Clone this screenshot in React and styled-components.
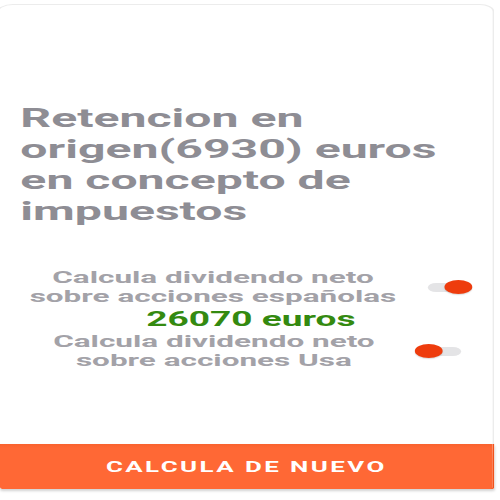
import React, { useState } from 'react';
import styled, { createGlobalStyle } from 'styled-components';

// the screenshot is a phone screen stretched sideways, so the whole page is laid
// out at phone width and then widened by the same factor
const STRETCH = 1.852;

const GlobalStyle = createGlobalStyle`
  html, body {
    margin: 0;
    padding: 0;
    background: #fff;
    overflow: hidden;
  }
  body {
    font-family: Roboto, "Liberation Sans", Arial, sans-serif;
  }
`;

const Screen = styled.div`
  width: ${500 / STRETCH}px;
  height: 500px;
  transform: scaleX(${STRETCH});
  transform-origin: 0 0;
  display: flex;
  flex-direction: column;
`;

const Card = styled.div`
  margin: 4px 0 0 -2px;
  width: 269px;
  height: 440px;
  box-sizing: border-box;
  border: 1px solid #ececec;
  border-bottom: none;
  border-radius: 9px 8px 0 0;
  padding: 98px 0 0 12px;
  display: flex;
  flex-direction: column;
`;

const Title = styled.h1`
  margin: 0;
  font-size: 26px;
  line-height: 31px;
  font-weight: 700;
  color: #8e8d94;
`;

const Options = styled.div`
  margin-top: 41px;
  margin-left: -10px;
  display: flex;
  flex-direction: column;
  align-items: center;
  gap: 2px;
`;

const OptionRow = styled.div`
  display: flex;
  align-items: center;
  justify-content: center;
  gap: ${p => p.$gap}px;
  padding-left: ${p => p.$shift}px;
`;

const OptionText = styled.div`
  font-size: 17px;
  line-height: 19px;
  font-weight: 700;
  color: #a3a2a8;
  text-align: center;
`;

const Result = styled.div`
  font-size: 20px;
  line-height: 22px;
  font-weight: 700;
  color: #348a10;
  padding-left: 4px;
`;

const Track = styled.button`
  position: relative;
  width: 24px;
  height: 9px;
  padding: 0;
  border: none;
  border-radius: 5px;
  background: #e4e4e6;
  cursor: pointer;
  flex-shrink: 0;
`;

const Thumb = styled.span`
  position: absolute;
  top: 50%;
  left: ${p => (p.$on ? 9 : -1)}px;
  width: 15px;
  height: 14px;
  margin-top: -7px;
  border-radius: 50%;
  background: #ee3c0d;
  box-shadow: 0 1px 1px rgba(0, 0, 0, 0.15);
`;

const ActionButton = styled.button`
  width: 267px;
  height: 45px;
  border: none;
  border-right: 1px solid #f0521c;
  border-radius: 0 0 2px 2px;
  background: linear-gradient(#f9622e 0, #ff6835 4px);
  box-shadow: 0 2px 2px rgba(0, 0, 0, 0.18);
  color: #fff;
  font-family: Roboto, "Liberation Sans", Arial, sans-serif;
  font-size: 14px;
  font-weight: 700;
  letter-spacing: 1.3px;
  cursor: pointer;
`;

function Switch({ on, onToggle }) {
  return (
    <Track onClick={onToggle}>
      <Thumb $on={on} />
    </Track>
  );
}

export default function App() {
  const [spain, setSpain] = useState(true);
  const [usa, setUsa] = useState(false);

  return (
    <>
      <GlobalStyle />
      <Screen>
        <Card>
          <Title>
            Retencion en
            <br />
            origen(6930) euros
            <br />
            en concepto de
            <br />
            impuestos
          </Title>
          <Options>
            <OptionRow $gap={17} $shift={4}>
              <OptionText>
                Calcula dividendo neto
                <br />
                sobre acciones españolas
              </OptionText>
              <Switch on={spain} onToggle={() => setSpain(!spain)} />
            </OptionRow>
            <Result>26070 euros</Result>
            <OptionRow $gap={23} $shift={11}>
              <OptionText>
                Calcula dividendo neto
                <br />
                sobre acciones Usa
              </OptionText>
              <Switch on={usa} onToggle={() => setUsa(!usa)} />
            </OptionRow>
          </Options>
        </Card>
        <ActionButton>CALCULA DE NUEVO</ActionButton>
      </Screen>
    </>
  );
}
